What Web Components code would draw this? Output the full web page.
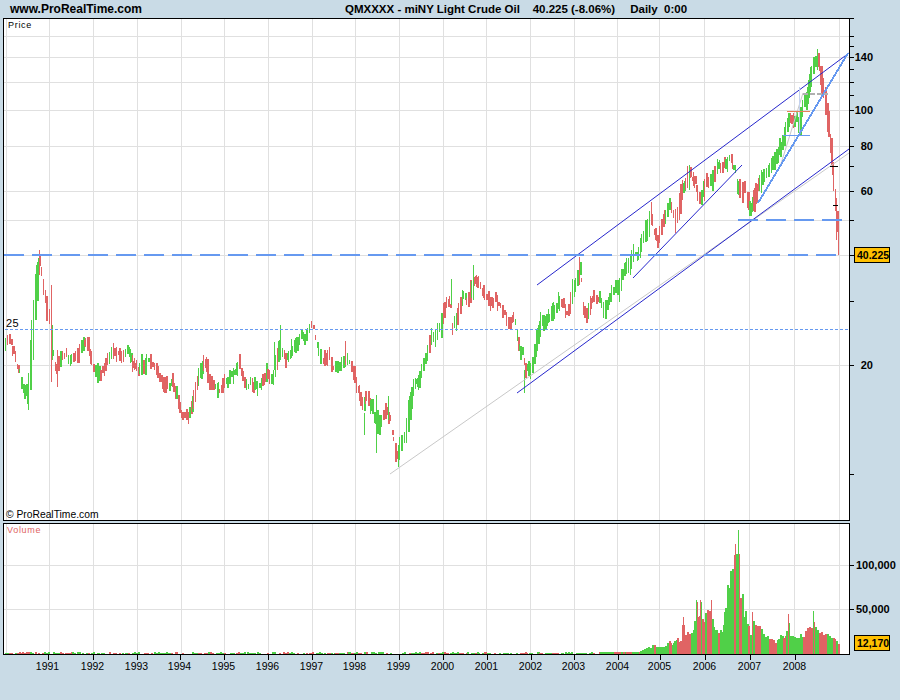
<!DOCTYPE html>
<html>
<head>
<meta charset="utf-8">
<title>QMXXXX</title>
<style>
  html, body { margin: 0; height: 700px; overflow: hidden; background: #c9dbe6; }
</style>
</head>
<body>
<chart-header>
  <span slot="site">www.ProRealTime.com</span>
  <span slot="title">QMXXXX - miNY Light Crude Oil&nbsp;&nbsp;&nbsp; 40.225 (-8.06%)&nbsp;&nbsp;&nbsp;&thinsp; Daily&nbsp; 0:00</span>
</chart-header>
<price-panel></price-panel>
<volume-panel></volume-panel>

<script>
// shared helpers
const GRID_X = [6, 49, 93, 137, 181, 224, 268, 312, 355, 399, 443, 486, 530, 574, 617, 659, 704, 749, 794, 839];
const YEAR_TICKS = [48, 93, 137, 180, 224, 268, 312, 355, 399, 443, 487, 531, 574, 618, 660, 705, 750, 795];
const RED = "#e06464", GREEN = "#50d048", GRID = "#e0e0e0", YELLOW = "#ffc000";

function rng(seed) {
  return () => {
    seed |= 0; seed = seed + 0x6D2B79F5 | 0;
    let t = Math.imul(seed ^ seed >>> 15, 1 | seed);
    t = t + Math.imul(t ^ t >>> 7, 61 | t) ^ t;
    return ((t ^ t >>> 14) >>> 0) / 4294967296;
  };
}

function interp(points, x) {
  for (let i = 1; i < points.length; i++) {
    if (x <= points[i][0]) {
      const [x0, y0] = points[i - 1], [x1, y1] = points[i];
      return y0 + (y1 - y0) * (x - x0) / (x1 - x0);
    }
  }
  return points[points.length - 1][1];
}

const rect = (x, y, w, h, c) => `<rect x="${x}" y="${y}" width="${w}" height="${h}" fill="${c}"/>`;
const line = (x1, y1, x2, y2, c, w = 1, extra = "") =>
  `<line x1="${x1}" y1="${y1}" x2="${x2}" y2="${y2}" stroke="${c}" stroke-width="${w}" ${extra}/>`;

class ChartHeader extends HTMLElement {
  constructor() {
    super();
    this.attachShadow({ mode: "open" });
    this.shadowRoot.innerHTML = `
      <style>
        :host {
          display: flex;
          height: 18px;
          align-items: center;
          padding-left: 10px;
          font: bold 12px "Liberation Sans", Arial, sans-serif;
          color: #000;
          box-sizing: border-box;
        }
        .site { width: 335px; }
        .title { font-size: 11.5px; white-space: pre; }
      </style>
      <div class="site"><slot name="site"></slot></div>
      <div class="title"><slot name="title"></slot></div>
    `;
  }
}

// base for the two panels: svg uses page coordinates through its viewBox
class ChartPanel extends HTMLElement {
  constructor() {
    super();
    this.attachShadow({ mode: "open" });
  }

  frame(top, bottom) {
    return rect(3, top, 1, bottom - top + 1, "#000") + rect(3, top, 847, 1, "#000") +
      rect(849, top, 1, bottom - top + 1, "#000") + rect(3, bottom, 847, 1, "#000");
  }

  paint(y0, height, body) {
    this.shadowRoot.innerHTML = `
      <style>
        :host { display: block; height: ${height}px; }
        svg { display: block; }
        rect, line.crisp { shape-rendering: crispEdges; }
        .ax { font: bold 11px "Liberation Sans", Arial, sans-serif; fill: #000; }
        .box { font-size: 10.5px; }
        .yr { font: 10.5px "Liberation Sans", Arial, sans-serif; fill: #000; }
        .lab { font: 9px "Liberation Sans", Arial, sans-serif; letter-spacing: .7px; }
        .copy { font: 10.3px "Liberation Sans", Arial, sans-serif; fill: #000; }
        .num { font: 11px "Liberation Sans", Arial, sans-serif; letter-spacing: .5px; fill: #000; }
      </style>
      <svg width="900" height="${height}" viewBox="0 ${y0} 900 ${height}">${body}</svg>
    `;
  }
}

class PricePanel extends ChartPanel {
  connectedCallback() {
    const top = 18, bottom = 520;
    let s = rect(4, top, 845, bottom - top, "#fff");

    GRID_X.forEach(x => { s += rect(x, top + 1, 1, bottom - top - 1, GRID); });
    [36, 57, 82, 110, 146, 191, 220, 255, 365].forEach(y => { s += rect(4, y, 845, 1, GRID); });

    s += this.bars();
    s += this.drawings();
    s += this.frame(top, bottom);

    [18, 36, 46, 57, 69, 82, 95, 110, 127, 146, 166, 191, 220, 255, 301, 365, 474].forEach(y => {
      s += rect(850, y, 4, 1, "#000");
    });
    [[140, 57], [100, 110], [80, 146], [60, 191], [20, 365]].forEach(([v, y]) => {
      s += `<text class="ax" x="873" y="${y + 4}" text-anchor="end">${v}</text>`;
    });
    s += rect(854.5, 247.5, 35, 15, YELLOW).replace("/>", ' stroke="#000"/>');
    s += `<text class="ax box" x="857" y="259">40.225</text>`;

    s += `<text class="lab" x="8" y="28" fill="#000">Price</text>`;
    s += `<text class="num" x="6" y="327">25</text>`;
    s += `<text class="copy" x="6" y="518">© ProRealTime.com</text>`;

    this.paint(18, 504, s);
  }

  bars() {
    const T = [[5,345],[8,342],[12,350],[15,362],[18,375],[21,385],[25,388],[27,395],[29,385],[31,360],[33,320],[35,300],[38,265],[40,258],[42,280],[45,295],[47,315],[50,320],[52,350],[56,370],[60,360],[63,353],[68,357],[72,355],[76,352],[80,349],[85,339],[88,345],[91,362],[94,375],[100,373],[105,365],[110,355],[113,348],[118,352],[122,352],[128,348],[132,361],[137,371],[141,368],[146,362],[153,366],[158,378],[165,385],[172,383],[176,395],[180,415],[188,416],[192,407],[195,390],[198,378],[203,367],[207,370],[210,385],[216,385],[221,390],[225,380],[231,375],[236,372],[239,362],[244,381],[248,385],[252,383],[258,387],[264,380],[268,370],[271,380],[275,370],[278,347],[282,352],[286,362],[292,352],[297,345],[300,333],[304,340],[310,325],[313,330],[316,342],[318,355],[323,365],[328,353],[332,367],[340,367],[346,357],[350,360],[354,377],[358,393],[362,403],[366,397],[372,408],[376,423],[381,420],[386,407],[390,420],[394,447],[398,457],[401,440],[404,443],[407,427],[410,400],[414,383],[418,382],[422,367],[427,353],[431,337],[435,340],[438,323],[441,323],[445,303],[449,300],[452,327],[456,323],[460,303],[464,290],[468,303],[472,280],[476,283],[480,285],[485,295],[490,300],[495,300],[500,307],[505,313],[510,323],[514,317],[517,335],[518,347],[522,353],[525,370],[530,370],[534,357],[538,330],[542,320],[546,323],[552,317],[558,305],[563,303],[567,320],[572,293],[576,280],[580,270],[583,310],[587,320],[590,303],[595,297],[600,297],[605,310],[610,297],[615,287],[620,280],[625,270],[630,267],[633,250],[637,263],[640,247],[644,230],[647,237],[650,210],[653,223],[657,243],[661,227],[665,217],[669,203],[673,213],[677,220],[681,193],[685,183],[689,173],[693,180],[697,192],[701,197],[705,183],[709,187],[713,180],[718,162],[722,167],[727,160],[730,155],[735,170],[737,187],[741,193],[745,187],[749,207],[752,212],[755,190],[760,180],[766,177],[770,167],[775,153],[780,147],[784,137],[788,117],[792,127],[795,117],[798,127],[802,107],[806,103],[809,87],[812,67],[815,63],[818,53],[820,73],[823,90],[826,103],[829,133],[831,153],[833,180],[835,203],[837,227],[838,245]];
    // long wicks read off the picture: x, top, bottom
    const W = { 28:[385,410], 39:[250,275], 51:[285,382], 57:[350,387], 280:[325,360], 274:[342,370], 345:[341,365], 364:[413,435], 376:[395,453], 388:[396,420], 398:[445,467], 451:[279,305], 473:[265,300], 524:[370,393], 579:[257,285], 651:[202,225], 689:[165,190], 817:[49,70], 836:[205,240], 838:[232,255] };
    const r = rng(19);
    let s = "", color = RED, run = 0, wig = 0;
    for (let x = 5; x <= 838; x += r() < 0.55 ? 2 : 1) {
      const rising = interp(T, x + 3) < interp(T, x - 1);
      if (run-- <= 0) {
        color = r() < (rising ? 0.78 : 0.24) ? GREEN : RED;
        run = Math.floor(r() * 3);
      }
      wig = wig * 0.5 + (r() - 0.5) * 8;
      const c = interp(T, x) + wig;
      const half = (x > 820 ? 9 : 2) + r() * 6;
      // reach the neighbours so steep runs stay connected
      let hi = Math.min(c - half, interp(T, x + 2)), lo = Math.max(c + half, interp(T, x - 2));
      if (r() < 0.1) lo += r() * 10;
      if (r() < 0.08) hi -= r() * 8;
      const w = r() < 0.5 ? 2 : 1;
      s += rect(x, Math.round(hi), w, Math.max(2, Math.round(lo - hi)), x > 820 ? RED : color);
    }
    Object.keys(W).forEach(x => {
      const [hi, lo] = W[x];
      s += rect(+x, hi, 1, lo - hi, x > 820 ? RED : (+x % 3 ? GREEN : RED));
    });
    return s;
  }

  drawings() {
    const BLUE = "#2626cc", LIGHT = "#6699f0", GRAY = "#c8c8c8";
    let s = "";
    s += line(390, 474, 849, 153, GRAY);
    s += line(537, 285, 849, 53, BLUE);
    s += line(517, 393, 849, 149, BLUE);
    s += line(633, 278, 742, 165, BLUE);
    s += line(780, 167, 803, 93, GRAY);
    s += line(799.5, 87, 799.5, 135, "#c4d2ee", 1, 'class="crisp"');
    s += line(4, 255, 836, 255, LIGHT, 2, 'stroke-dasharray="20 8" class="crisp"');
    s += line(738, 220, 842, 220, LIGHT, 2, 'stroke-dasharray="20 8" class="crisp"');
    s += line(5, 329.5, 849, 329.5, LIGHT, 1, 'stroke-dasharray="3 2" class="crisp"');
    s += line(758, 203, 848, 53, LIGHT, 2, 'class="crisp"');
    s += rect(787, 111, 23, 1, "#e8805a");
    s += rect(783, 135, 27, 1, LIGHT);
    s += line(803, 94, 828, 94, "#b0b0b0", 2, 'stroke-dasharray="5 2" class="crisp"');
    s += rect(830, 166, 8, 1, "#000");
    s += rect(833, 205, 5, 1, "#000");
    return s;
  }
}

class VolumePanel extends ChartPanel {
  connectedCallback() {
    const top = 523, bottom = 654;
    let s = rect(4, top, 845, bottom - top, "#fff");

    GRID_X.forEach(x => { s += rect(x, top + 1, 1, bottom - top - 1, GRID); });
    [565, 609].forEach(y => { s += rect(4, y, 845, 1, GRID); });

    s += this.bars(bottom);
    s += this.frame(top, bottom);

    [[100000, 565], [50000, 609]].forEach(([v, y]) => {
      s += rect(850, y, 4, 1, "#000");
      s += `<text class="ax" x="856" y="${y + 4}">${v.toLocaleString("en-US")}</text>`;
    });
    s += rect(854.5, 635.5, 35, 15, YELLOW).replace("/>", ' stroke="#000"/>');
    s += `<text class="ax box" x="857" y="647">12,170</text>`;

    s += `<text class="lab" x="7" y="533" fill="${RED}">Volume</text>`;

    YEAR_TICKS.forEach((x, i) => {
      s += rect(x, 655, 1, 5, "#000");
      s += `<text class="yr" x="${x - 0.5}" y="670" text-anchor="middle">${1991 + i}</text>`;
    });

    this.paint(522, 178, s);
  }

  bars(bottom) {
    const E = [[5,2],[600,2],[620,2],[635,2],[640,3],[645,6],[650,8],[652,11],[655,8],[660,7],[665,8],[668,14],[672,12],[675,17],[680,15],[683,37],[685,24],[688,22],[690,27],[693,30],[696,54],[698,38],[700,54],[702,45],[705,42],[707,45],[709,48],[711,54],[713,30],[715,30],[717,30],[720,25],[722,28],[724,47],[726,65],[728,78],[730,90],[733,95],[735,110],[737,105],[738,124],[739,90],[740,60],[742,65],[743,48],[745,50],[746,38],[748,30],[750,22],[752,42],[754,30],[757,37],[760,29],[765,20],[770,18],[775,14],[780,20],[785,20],[788,40],[790,22],[795,18],[800,20],[805,25],[810,30],[813,43],[816,28],[820,22],[825,26],[830,18],[835,15],[838,12]];
    const r = rng(11);
    let s = "", color = GREEN;
    for (let x = 5; x <= 838; x += r() < 0.7 ? 2 : 1) {
      if (r() < 0.55) color = r() < 0.58 ? GREEN : RED;
      const env = interp(E, x);
      const h = x < 600 ? Math.round(r() * 2) : Math.round(env * (0.75 + r() * 0.25));
      if (h > 0) s += rect(x, bottom - h, 2, h, color);
    }
    s += rect(738, bottom - 124, 1, 124, GREEN);
    [[735, 110, RED], [696, 54, GREEN], [700, 54, RED], [711, 54, RED], [683, 37, RED], [752, 42, RED], [788, 40, RED], [813, 43, GREEN]].forEach(([x, h, c]) => {
      s += rect(x, bottom - h, 1, h, c);
    });
    return s;
  }
}

customElements.define("chart-header", ChartHeader);
customElements.define("price-panel", PricePanel);
customElements.define("volume-panel", VolumePanel);
</script>
</body>
</html>
